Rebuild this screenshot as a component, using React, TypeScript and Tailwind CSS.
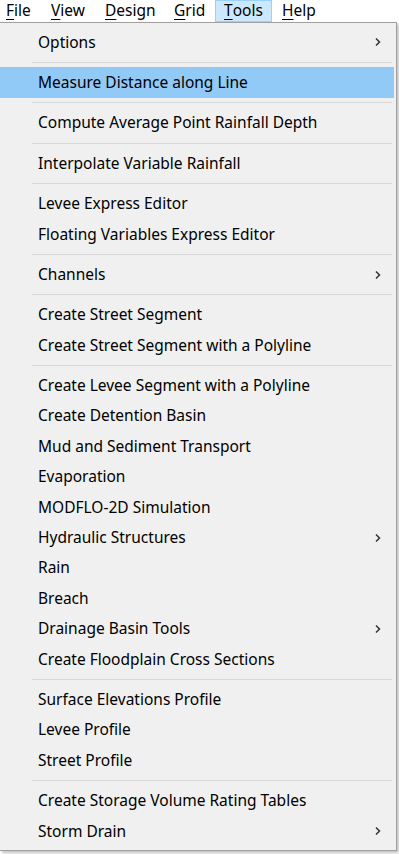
const font = { fontFamily: '"Noto Sans", "Open Sans", sans-serif' };

type Entry = { label: string; sub?: boolean; active?: boolean } | "sep";

const entries: Entry[] = [
  { label: "Options", sub: true },
  "sep",
  { label: "Measure Distance along Line", active: true },
  "sep",
  { label: "Compute Average Point Rainfall Depth" },
  "sep",
  { label: "Interpolate Variable Rainfall" },
  "sep",
  { label: "Levee Express Editor" },
  { label: "Floating Variables Express Editor" },
  "sep",
  { label: "Channels", sub: true },
  "sep",
  { label: "Create Street Segment" },
  { label: "Create Street Segment with a Polyline" },
  "sep",
  { label: "Create Levee Segment with a Polyline" },
  { label: "Create Detention Basin" },
  { label: "Mud and Sediment Transport" },
  { label: "Evaporation" },
  { label: "MODFLO-2D Simulation" },
  { label: "Hydraulic Structures", sub: true },
  { label: "Rain" },
  { label: "Breach" },
  { label: "Drainage Basin Tools", sub: true },
  { label: "Create Floodplain Cross Sections" },
  "sep",
  { label: "Surface Elevations Profile" },
  { label: "Levee Profile" },
  { label: "Street Profile" },
  "sep",
  { label: "Create Storage Volume Rating Tables" },
  { label: "Storm Drain", sub: true },
];

function Chevron() {
  return (
    <svg width="8" height="10" viewBox="0 0 8 10" className="text-[#333]">
      <path d="M2 1.5 L5.5 5 L2 8.5" fill="none" stroke="currentColor" strokeWidth="1.5" />
    </svg>
  );
}

function BarItem({ first, rest, w, active }: { first: string; rest: string; w: string; active?: boolean }) {
  return (
    <div
      className={
        active
          ? `${w} h-[22px] flex items-center pl-[8px] bg-[#cce8ff] border border-[#99d1ff]`
          : `${w} h-[22px] flex items-center`
      }
    >
      <span className="underline underline-offset-[3px] decoration-1">{first}</span>
      <span>{rest}</span>
    </div>
  );
}

export default function App() {
  return (
    <div className="w-[399px] h-[854px] bg-white text-black text-[15.5px] overflow-hidden" style={font}>
      <div className="h-[22px] flex items-center bg-white leading-none pl-[6px]">
        <BarItem first="F" rest="ile" w="w-[45px]" />
        <BarItem first="V" rest="iew" w="w-[54px]" />
        <BarItem first="D" rest="esign" w="w-[69px]" />
        <BarItem first="G" rest="rid" w="w-[41px]" />
        <BarItem first="T" rest="ools" w="w-[57px]" active />
        <div className="w-[10px]" />
        <BarItem first="H" rest="elp" w="w-[40px]" />
      </div>
      <div className="w-[397px] h-[829px] bg-[#f0f0f0] border-t border-r border-b border-[#a0a0a0] pt-[4px] pb-[3px] shadow-[2px_2px_3px_rgba(0,0,0,0.25)]">
        {entries.map((e, i) =>
          e === "sep" ? (
            <div key={i} className="h-[10px] flex items-center pl-[32px] pr-[4px]">
              <div className="h-px w-full bg-[#d7d7d7]" />
            </div>
          ) : (
            <div
              key={i}
              className={
                "h-[30.4px] flex items-center justify-between pl-[38px] pr-[12px] mr-[2px] " +
                (e.active ? "bg-[#91c9f7]" : "")
              }
            >
              <span className="whitespace-nowrap">{e.label}</span>
              {e.sub && <Chevron />}
            </div>
          )
        )}
      </div>
    </div>
  );
}
